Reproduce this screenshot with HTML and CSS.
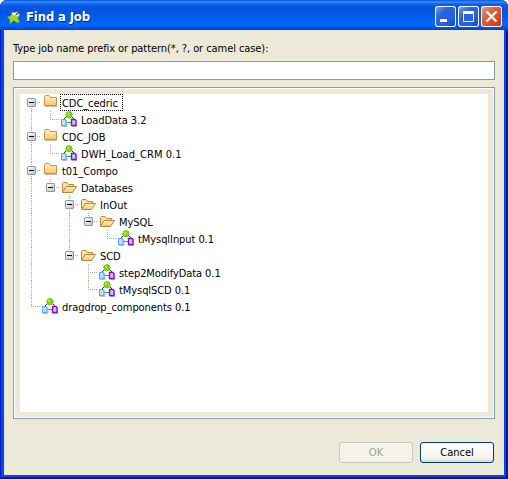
FILE: index.html
```html
<!DOCTYPE html>
<html lang="en">
<head>
<meta charset="utf-8">
<title>Find a Job</title>
<link rel="stylesheet" href="styles.css">
</head>
<body>
<svg class="defs" width="0" height="0">
  <defs>
    <linearGradient id="fold" x1="0" y1="0" x2="0" y2="1"><stop offset="0" stop-color="#fff3c8"/><stop offset="1" stop-color="#f5c66d"/></linearGradient>
    <linearGradient id="box" x1="0" y1="0" x2="1" y2="1"><stop offset="0" stop-color="#fff"/><stop offset="1" stop-color="#c9c1b1"/></linearGradient>
    <symbol id="folder" viewBox="0 0 16 17">
      <path d="M2.500 11.500V3.500L3.500 1.500H7L8.500 3.500H14.500V11.500Z" fill="url(#fold)" stroke="#c8914a"/>
      <path d="M3 12.500H15" stroke="#b67a36" opacity=".5"/>
    </symbol>
    <symbol id="open" viewBox="0 0 16 17">
      <path d="M1.500 12.500V4.500L2.500 3.500H6L7.500 5.500H12.500V7.500" fill="#ffe5a0" stroke="#bd8438"/>
      <path d="M1.500 13.500L5 7.500H15.500L11.500 13.500Z" fill="url(#fold)" stroke="#bd8438"/>
    </symbol>
    <symbol id="job" viewBox="0 0 16 17">
      <path d="M5.500 5.500L2.500 8.500M10.500 5.500L13.500 8.500" stroke="#222" fill="none"/>
      <path d="M5 11.500H10" stroke="#19b82c" stroke-width="1.200"/>
      <path d="M1 15.500H6V10M11 15.500H16V9" stroke="#bbb" fill="none"/>
      <path d="M.500 8.500H4L5 9.500V14.500H.500Z" fill="#bfe2ff" stroke="#5fa8ee" stroke-width="1.200"/>
      <path d="M10.500 8.500H14L15 9.500V14.500H10.500Z" fill="#d5c5fa" stroke="#7d10dc" stroke-width="1.400"/>
      <circle cx="8" cy="3.700" r="3.200" fill="#80dc00" stroke="#58ae18" stroke-width=".6"/>
      <circle cx="7" cy="2.700" r="1" fill="#b5f45a"/>
    </symbol>
    <symbol id="toggle" viewBox="0 0 19 17">
      <rect x="5.500" y="4.500" width="8" height="8" rx=".7" fill="url(#box)" stroke="#7898b5"/>
      <path d="M7 8.500H12" stroke="#000"/>
    </symbol>
    <symbol id="v" viewBox="0 0 19 17"><path d="M9.500 0V17" class="dots"/></symbol>
    <symbol id="tee" viewBox="0 0 19 17"><path d="M9.500 0V17M9 8.500H19" class="dots"/></symbol>
    <symbol id="first" viewBox="0 0 19 17"><path d="M9.500 8V17M9 8.500H19" class="dots"/></symbol>
    <symbol id="ell" viewBox="0 0 19 17"><path d="M9.500 0V9M9 8.500H19" class="dots"/></symbol>
  </defs>
</svg>
<div class="window">
  <header class="titlebar">
    <svg class="logo" width="16" height="16" viewBox="0 0 16 16">
      <path d="M5.500 2.500L8 5L13 5.500L10.500 9L12.500 13.500L9 13L7 11L3 14.500L3 10.500L.500 8L4 7Z" fill="#a6d71c" stroke="#8fb91c" stroke-width=".7"/>
      <path d="M5.500 3.500L8 6M7 5L11 3.500L10 7" fill="none" stroke="#fff" stroke-width="2"/>
      <path d="M9 6L12.500 1.500M11 4L14 1" stroke="#553ab7" stroke-width="1.300"/>
      <path d="M5 3.500H7" stroke="#e17722"/>
    </svg>
    <h1 class="title">Find a Job</h1>
    <div class="controls">
      <svg class="control" width="21" height="21"><path d="M5 14.500H12" stroke="#fff" stroke-width="3"/></svg>
      <svg class="control" width="21" height="21"><path d="M5.500 5V15.500H15.500V5" fill="none" stroke="#fff"/><path d="M5 6.500H16" stroke="#fff" stroke-width="3"/></svg>
      <svg class="control close" width="21" height="21"><path d="M5.500 5.500L15.500 15.500M15.500 5.500L5.500 15.500" stroke="#fff" stroke-width="2.200"/></svg>
    </div>
  </header>
  <main class="client">
    <label class="prompt" for="pattern">Type job name prefix or pattern(*, ?, or camel case):</label>
    <input class="pattern" id="pattern" type="text">
    <div class="frame">
      <div class="tree">
        <div class="row"><svg class="g"><use href="#first"/><use href="#toggle"/></svg><svg class="i"><use href="#folder"/></svg><span class="name focus">CDC_cedric</span></div>
        <div class="row"><svg class="g"><use href="#v"/></svg><svg class="g"><use href="#ell"/></svg><svg class="i"><use href="#job"/></svg><span class="name">LoadData 3.2</span></div>
        <div class="row"><svg class="g"><use href="#tee"/><use href="#toggle"/></svg><svg class="i"><use href="#folder"/></svg><span class="name">CDC_JOB</span></div>
        <div class="row"><svg class="g"><use href="#v"/></svg><svg class="g"><use href="#ell"/></svg><svg class="i"><use href="#job"/></svg><span class="name wide">DWH_Load_CRM 0.1</span></div>
        <div class="row"><svg class="g"><use href="#tee"/><use href="#toggle"/></svg><svg class="i"><use href="#folder"/></svg><span class="name">t01_Compo</span></div>
        <div class="row"><svg class="g"><use href="#v"/></svg><svg class="g"><use href="#ell"/><use href="#toggle"/></svg><svg class="i"><use href="#open"/></svg><span class="name">Databases</span></div>
        <div class="row"><svg class="g"><use href="#v"/></svg><svg class="g"></svg><svg class="g"><use href="#tee"/><use href="#toggle"/></svg><svg class="i"><use href="#open"/></svg><span class="name wide">InOut</span></div>
        <div class="row"><svg class="g"><use href="#v"/></svg><svg class="g"></svg><svg class="g"><use href="#v"/></svg><svg class="g"><use href="#ell"/><use href="#toggle"/></svg><svg class="i"><use href="#open"/></svg><span class="name">MySQL</span></div>
        <div class="row"><svg class="g"><use href="#v"/></svg><svg class="g"></svg><svg class="g"><use href="#v"/></svg><svg class="g"></svg><svg class="g"><use href="#ell"/></svg><svg class="i"><use href="#job"/></svg><span class="name">tMysqlInput 0.1</span></div>
        <div class="row"><svg class="g"><use href="#v"/></svg><svg class="g"></svg><svg class="g"><use href="#ell"/><use href="#toggle"/></svg><svg class="i"><use href="#open"/></svg><span class="name">SCD</span></div>
        <div class="row"><svg class="g"><use href="#v"/></svg><svg class="g"></svg><svg class="g"></svg><svg class="g"><use href="#tee"/></svg><svg class="i"><use href="#job"/></svg><span class="name">step2ModifyData 0.1</span></div>
        <div class="row"><svg class="g"><use href="#v"/></svg><svg class="g"></svg><svg class="g"></svg><svg class="g"><use href="#ell"/></svg><svg class="i"><use href="#job"/></svg><span class="name">tMysqlSCD 0.1</span></div>
        <div class="row"><svg class="g"><use href="#ell"/></svg><svg class="i"><use href="#job"/></svg><span class="name">dragdrop_components 0.1</span></div>
      </div>
    </div>
    <div class="actions">
      <button class="button" disabled>OK</button>
      <button class="button primary">Cancel</button>
    </div>
  </main>
</div>
</body>
</html>
```

FILE: styles.css
```css
* { box-sizing: border-box; }
body {
  margin: 0;
  background: #fff;
  font: 11px/17px "DejaVu Sans Condensed", "DejaVu Sans", sans-serif;
  font-stretch: condensed;
  color: #000;
}
.defs { display: block; }
.window {
  width: 508px;
  height: 479px;
  display: flex;
  flex-direction: column;
  padding: 0 4px 4px;
  border-radius: 7px 7px 0 0;
  background: #0648e4;
  box-shadow: inset 1px 0 #0019cf, inset -2px -2px #001590;
  overflow: hidden;
}
.titlebar {
  height: 30px;
  flex: none;
  margin: 0 -4px;
  padding: 3px 6px 0 7px;
  display: flex;
  align-items: center;
  background: linear-gradient(#0753d6 0, #328cfc 2px, #1263eb 4px, #0055e3 7px, #0055e3 13px, #0261fb 20px, #0567ff 25px, #0350e2 28px, #0041c9 30px);
}
.title {
  flex: 1;
  margin: 0 0 0 3px;
  font: bold 13px/20px "DejaVu Sans Condensed", sans-serif;
  font-stretch: condensed;
  letter-spacing: -.15px;
  color: #fff;
  text-shadow: 1px 1px #0b2784;
}
.controls { display: flex; gap: 2px; }
.control {
  border-radius: 3px;
  box-shadow: inset 0 0 0 1px #fff;
  background: linear-gradient(135deg, #7ba2f5, #2c63e2 35%, #2561e5 65%, #1146c8);
}
.close { background: linear-gradient(135deg, #f1a48c, #e26443 35%, #df4a20 65%, #b93412); }
.client {
  flex: 1;
  min-height: 0;
  display: flex;
  flex-direction: column;
  padding: 10px 9px 12px;
  background: #ece9d8;
}
.prompt { height: 21px; line-height: 17px; letter-spacing: -.07px; }
.pattern {
  height: 19px;
  width: 482px;
  border: 1px solid #7f9db9;
  padding: 0 3px;
  background: #fff;
  font: inherit;
  outline: 0;
}
.frame {
  height: 332px;
  width: 482px;
  margin-top: 7px;
  padding: 6px;
  border: 1px solid #7f9db9;
  box-shadow: inset 0 0 0 1px #fff;
}
.tree { height: 100%; background: #fff; padding-left: 2px; }
.row { height: 17px; display: flex; }
.g { width: 19px; height: 17px; flex: none; }
.i { width: 16px; height: 17px; flex: none; margin: 0 2px 0 1px; }
.dots { stroke: #aca899; stroke-dasharray: 1 1; fill: none; }
.name { padding: 1px 2px 0; height: 17px; line-height: 17px; white-space: nowrap; letter-spacing: -.07px; }
.wide { letter-spacing: .06px; }
.focus { outline: 1px dotted #000; outline-offset: -1px; padding-right: 5px; }
.actions { margin-top: auto; display: flex; justify-content: flex-end; gap: 7px; padding-right: 1px; }
.button {
  width: 74px;
  height: 21px;
  padding: 0 0 1px;
  border: 1px solid #c9c7ba;
  border-radius: 3px;
  background: #f5f4ea;
  color: #a1a192;
  font: inherit;
}
.primary { border-color: #003c74; background: linear-gradient(#fff, #f3f2ec 80%, #dcd7cb); color: #000; }
```
